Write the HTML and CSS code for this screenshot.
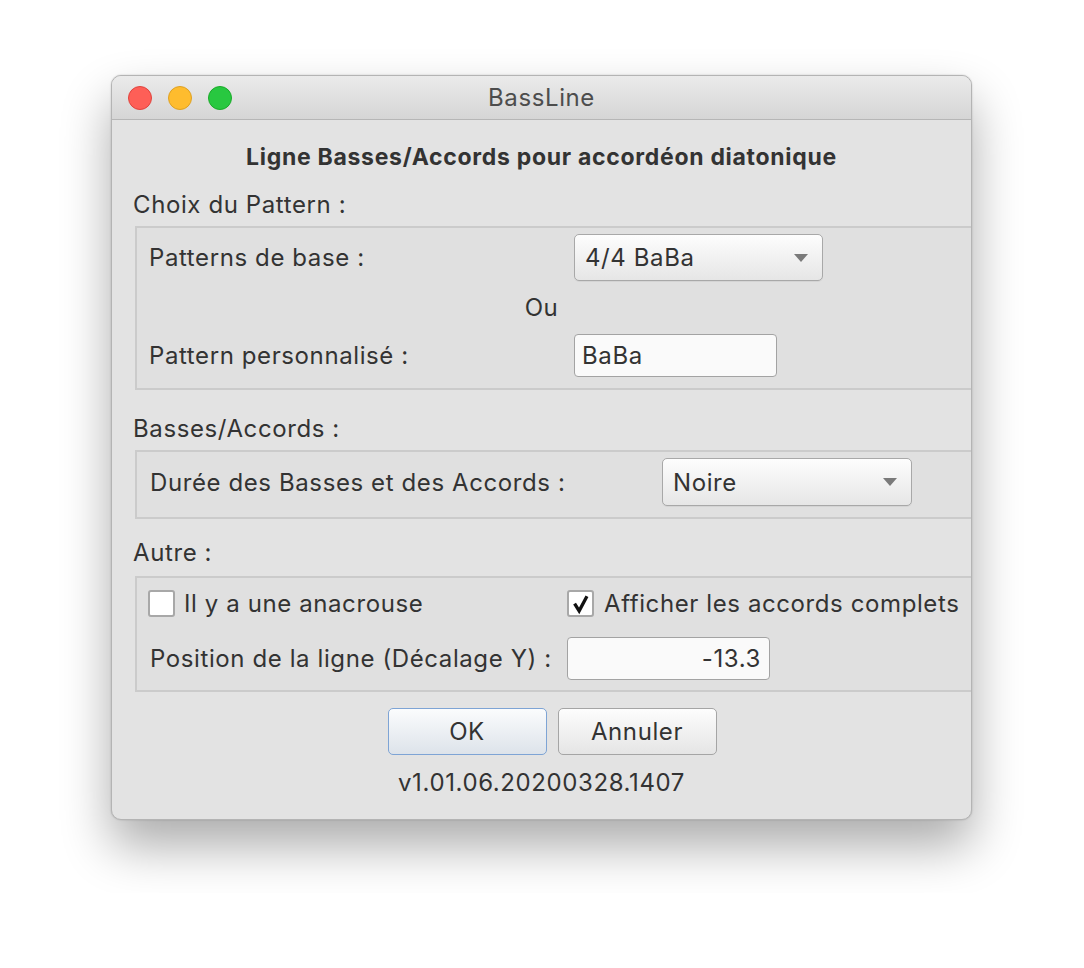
FILE: index.html
```html
<!DOCTYPE html>
<html lang="fr">
<head>
<meta charset="utf-8">
<title>BassLine</title>
<link rel="stylesheet" href="styles.css">
</head>
<body>
<div class="stage">
  <div class="window">
    <div class="titlebar">
      <div class="lights">
        <span class="light red"></span>
        <span class="light yellow"></span>
        <span class="light green"></span>
      </div>
      <div class="title">BassLine</div>
    </div>
    <div class="content">
      <div class="heading">Ligne Basses/Accords pour accordéon diatonique</div>

      <div class="section-label">Choix du Pattern :</div>
      <div class="panel panel-pattern">
        <div class="row r1">
          <span class="label">Patterns de base :</span>
          <div class="combo"><span>4/4 BaBa</span><i class="arrow"></i></div>
        </div>
        <div class="row r-ou"><span class="ou">Ou</span></div>
        <div class="row r3">
          <span class="label">Pattern personnalisé :</span>
          <div class="field field-pattern">BaBa</div>
        </div>
      </div>

      <div class="section-label s2">Basses/Accords :</div>
      <div class="panel panel-bass">
        <div class="row">
          <span class="label">Durée des Basses et des Accords :</span>
          <div class="combo combo-noire"><span>Noire</span><i class="arrow"></i></div>
        </div>
      </div>

      <div class="section-label s3">Autre :</div>
      <div class="panel panel-autre">
        <div class="row rc">
          <label class="check"><span class="box"></span><span>Il y a une anacrouse</span></label>
          <label class="check"><span class="box checked"><svg viewBox="0 0 24 24" width="22" height="22"><path d="M5 11.5 L10 19.5 L18.5 3.5" fill="none" stroke="#111" stroke-width="3.6" stroke-linejoin="miter"/></svg></span><span>Afficher les accords complets</span></label>
        </div>
        <div class="row rp">
          <span class="label">Position de la ligne (Décalage Y) :</span>
          <div class="field field-num">-13.3</div>
        </div>
      </div>

      <div class="buttons">
        <div class="btn btn-default">OK</div>
        <div class="btn">Annuler</div>
      </div>
      <div class="version">v1.01.06.20200328.1407</div>
    </div>
  </div>
</div>
</body>
</html>
```

FILE: styles.css
```css
html, body {
  margin: 0;
  padding: 0;
  background: #ffffff;
}
body {
  font-family: Inter, "Noto Sans", "Liberation Sans", sans-serif;
  color: #333333;
}
.stage {
  padding: 75px 0 0 111px;
  height: 893px;
  box-sizing: border-box;
}
.window {
  width: 861px;
  height: 745px;
  box-sizing: border-box;
  border: 1px solid #b4b4b4;
  border-radius: 10px;
  background: #e3e3e3;
  overflow: hidden;
  box-shadow: 0 26px 50px rgba(0, 0, 0, 0.33), 0 0 2px rgba(0, 0, 0, 0.2);
  display: flex;
  flex-direction: column;
}
.titlebar {
  height: 43px;
  flex: 0 0 43px;
  background: linear-gradient(#ebebeb, #d5d5d5);
  border-bottom: 1px solid #b6b6b6;
  display: flex;
  align-items: center;
  position: relative;
}
.lights {
  display: flex;
  gap: 16px;
  padding-left: 16px;
}
.light {
  width: 24px;
  height: 24px;
  border-radius: 50%;
  box-sizing: border-box;
}
.red { background: #fe5f57; border: 1px solid #e0443e; }
.yellow { background: #febc2e; border: 1px solid #dea123; }
.green { background: #28c840; border: 1px solid #1aab29; }
.title {
  position: absolute;
  left: 0;
  right: 0;
  top: 0;
  bottom: 0;
  display: flex;
  align-items: center;
  justify-content: center;
  font-size: 24px;
  letter-spacing: 0.6px;
  color: #4d4d4d;
}
.content {
  flex: 1;
  padding: 0 0 0 21px;
  font-size: 24px;
  letter-spacing: 0.6px;
}
.heading {
  font-weight: bold;
  font-size: 23px;
  letter-spacing: 0.7px;
  text-align: center;
  height: 69px;
  line-height: 74px;
  margin-left: -21px;
}
.section-label {
  height: 37px;
  line-height: 32px;
}
.panel {
  margin-right: -20px;
  margin-left: 2px;
  border: 2px solid #cbcbcb;
  background: #e0e0e0;
  box-sizing: border-box;
}
.row {
  display: flex;
  align-items: center;
}
.label { display: block; }
.panel-pattern {
  height: 164px;
  padding: 6px 0 0 12px;
}
.panel-pattern .label { width: 425px; flex: 0 0 425px; }
.r1 { height: 47px; }
.r-ou { height: 53px; }
.ou { width: 785px; text-align: center; }
.r3 { height: 43px; }
.combo {
  box-sizing: border-box;
  width: 249px;
  height: 47px;
  border: 1.5px solid #a8a8a8;
  border-radius: 5px;
  background: linear-gradient(#fdfdfd, #e6e6e6);
  display: flex;
  align-items: center;
  justify-content: space-between;
  padding: 0 14px 0 10px;
  box-shadow: 0 1px 0 rgba(0,0,0,0.05);
}
.arrow {
  width: 0;
  height: 0;
  border-left: 7px solid transparent;
  border-right: 7px solid transparent;
  border-top: 8px solid #7a7a7a;
}
.field {
  box-sizing: border-box;
  height: 43px;
  border: 1.5px solid #a3a3a3;
  border-radius: 4px;
  background: #fafafa;
  display: flex;
  align-items: center;
}
.field-pattern {
  width: 203px;
  padding-left: 7px;
}
.s2 { margin-top: 23px; }
.panel-bass {
  height: 69px;
  padding: 6px 0 0 13px;
}
.panel-bass .row { height: 48px; }
.panel-bass .label { width: 512px; flex: 0 0 512px; }
.combo-noire { width: 250px; height: 48px; }
.s3 { margin-top: 20px; height: 37px; line-height: 28px; }
.panel-autre {
  height: 116px;
  padding: 12px 0 0 11px;
}
.rc { height: 27px; }
.check {
  display: flex;
  align-items: center;
  gap: 9px;
}
.check:first-child { width: 419px; flex: 0 0 419px; }
.check:last-child { gap: 10px; }
.box {
  width: 27px;
  height: 27px;
  flex: 0 0 27px;
  box-sizing: border-box;
  border: 2px solid #a8a8a8;
  border-radius: 3px;
  background: #ffffff;
  display: flex;
  align-items: center;
  justify-content: center;
}
.rp { height: 43px; margin-top: 20px; }
.rp .label { width: 417px; flex: 0 0 417px; padding-left: 2px; }
.field-num {
  width: 203px;
  height: 43px;
  justify-content: flex-end;
  padding-right: 8px;
}
.buttons {
  display: flex;
  justify-content: center;
  gap: 11px;
  margin-top: 16px;
  padding-left: 0;
}
.btn {
  box-sizing: border-box;
  width: 159px;
  height: 47px;
  border: 1.5px solid #a5a5a5;
  border-radius: 5px;
  background: linear-gradient(#fdfdfd, #e5e5e5);
  display: flex;
  align-items: center;
  justify-content: center;
}
.btn-default {
  border-color: #7ea4d5;
  background: linear-gradient(#fbfcfd, #dde3ea);
}
.version {
  text-align: center;
  height: 56px;
  line-height: 56px;
  margin-left: -21px;
}
```
